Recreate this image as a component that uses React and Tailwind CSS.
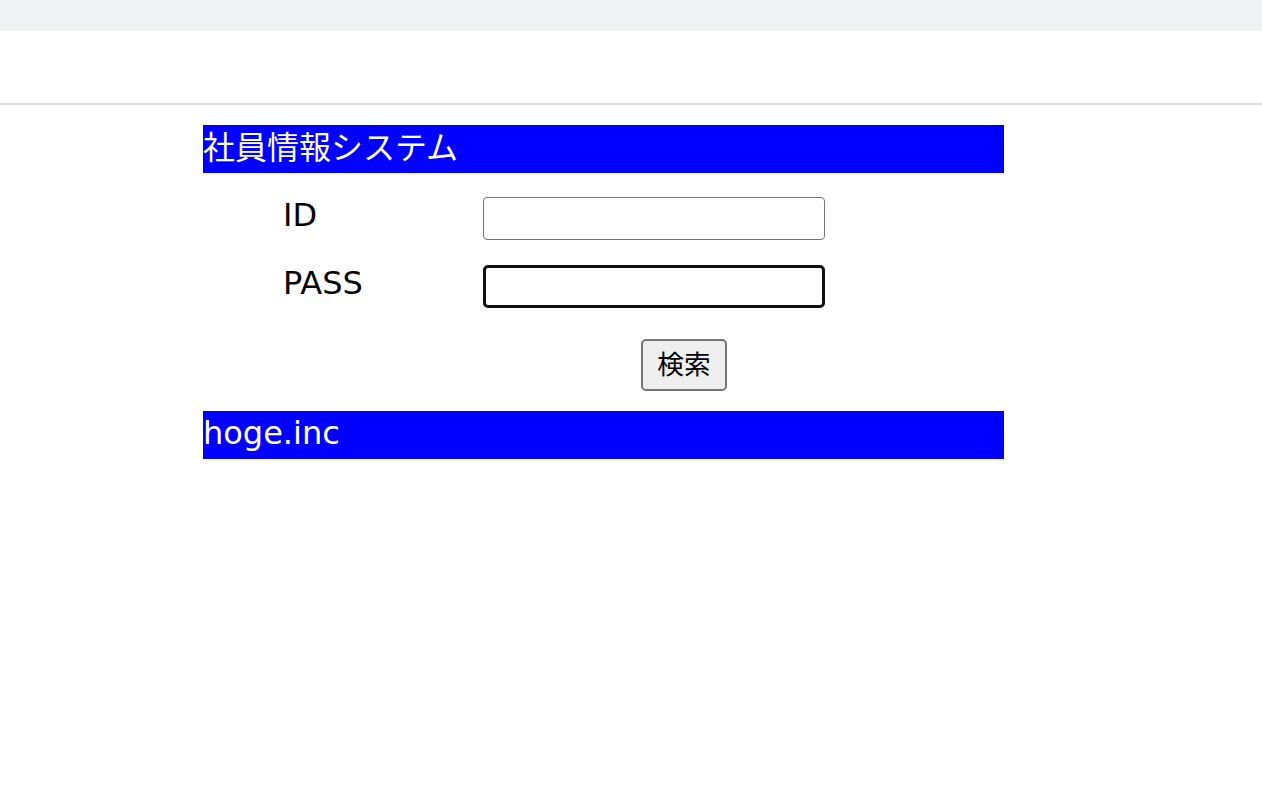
export default function App() {
  const font = { fontFamily: '"DejaVu Sans", "Noto Sans CJK JP", sans-serif' };
  return (
    <div className="min-h-[786px] bg-white" style={font}>
      <div className="h-[31px] bg-[#f1f2f4]" />
      <div className="h-[74px] border-b-2 border-[#d9d9d9]" />
      <div className="ml-[203px] w-[801px] mt-[20px]">
        <div className="h-[48px] bg-[#0000ff] text-white text-[32px] leading-[46px]">
          社員情報システム
        </div>
        <div className="pt-[24px]">
          <div className="flex items-start">
            <div className="w-[280px] pl-[80px] text-[32px] leading-[37px] text-black">ID</div>
            <input type="text" className="w-[342px] h-[43px] border border-[#767676] rounded-[4px] bg-white outline-none" />
          </div>
          <div className="flex items-start mt-[25px]">
            <div className="w-[280px] pl-[80px] text-[32px] leading-[37px] text-black">PASS</div>
            <input type="password" className="w-[342px] h-[43px] border-[3px] border-[#101010] rounded-[5px] bg-white outline-none" />
          </div>
          <div className="mt-[31px] pl-[438px] flex">
            <button className="w-[86px] h-[52px] bg-[#efefef] border-2 border-[#767676] rounded-[5px] text-[26.67px] leading-[40px] pb-[4px] text-black" style={{ fontFamily: '"Noto Sans CJK JP", sans-serif' }}>
              検索
            </button>
          </div>
        </div>
        <div className="mt-[20px] h-[48px] bg-[#0000ff] text-white text-[32px] leading-[44px]">
          hoge.inc
        </div>
      </div>
    </div>
  );
}
